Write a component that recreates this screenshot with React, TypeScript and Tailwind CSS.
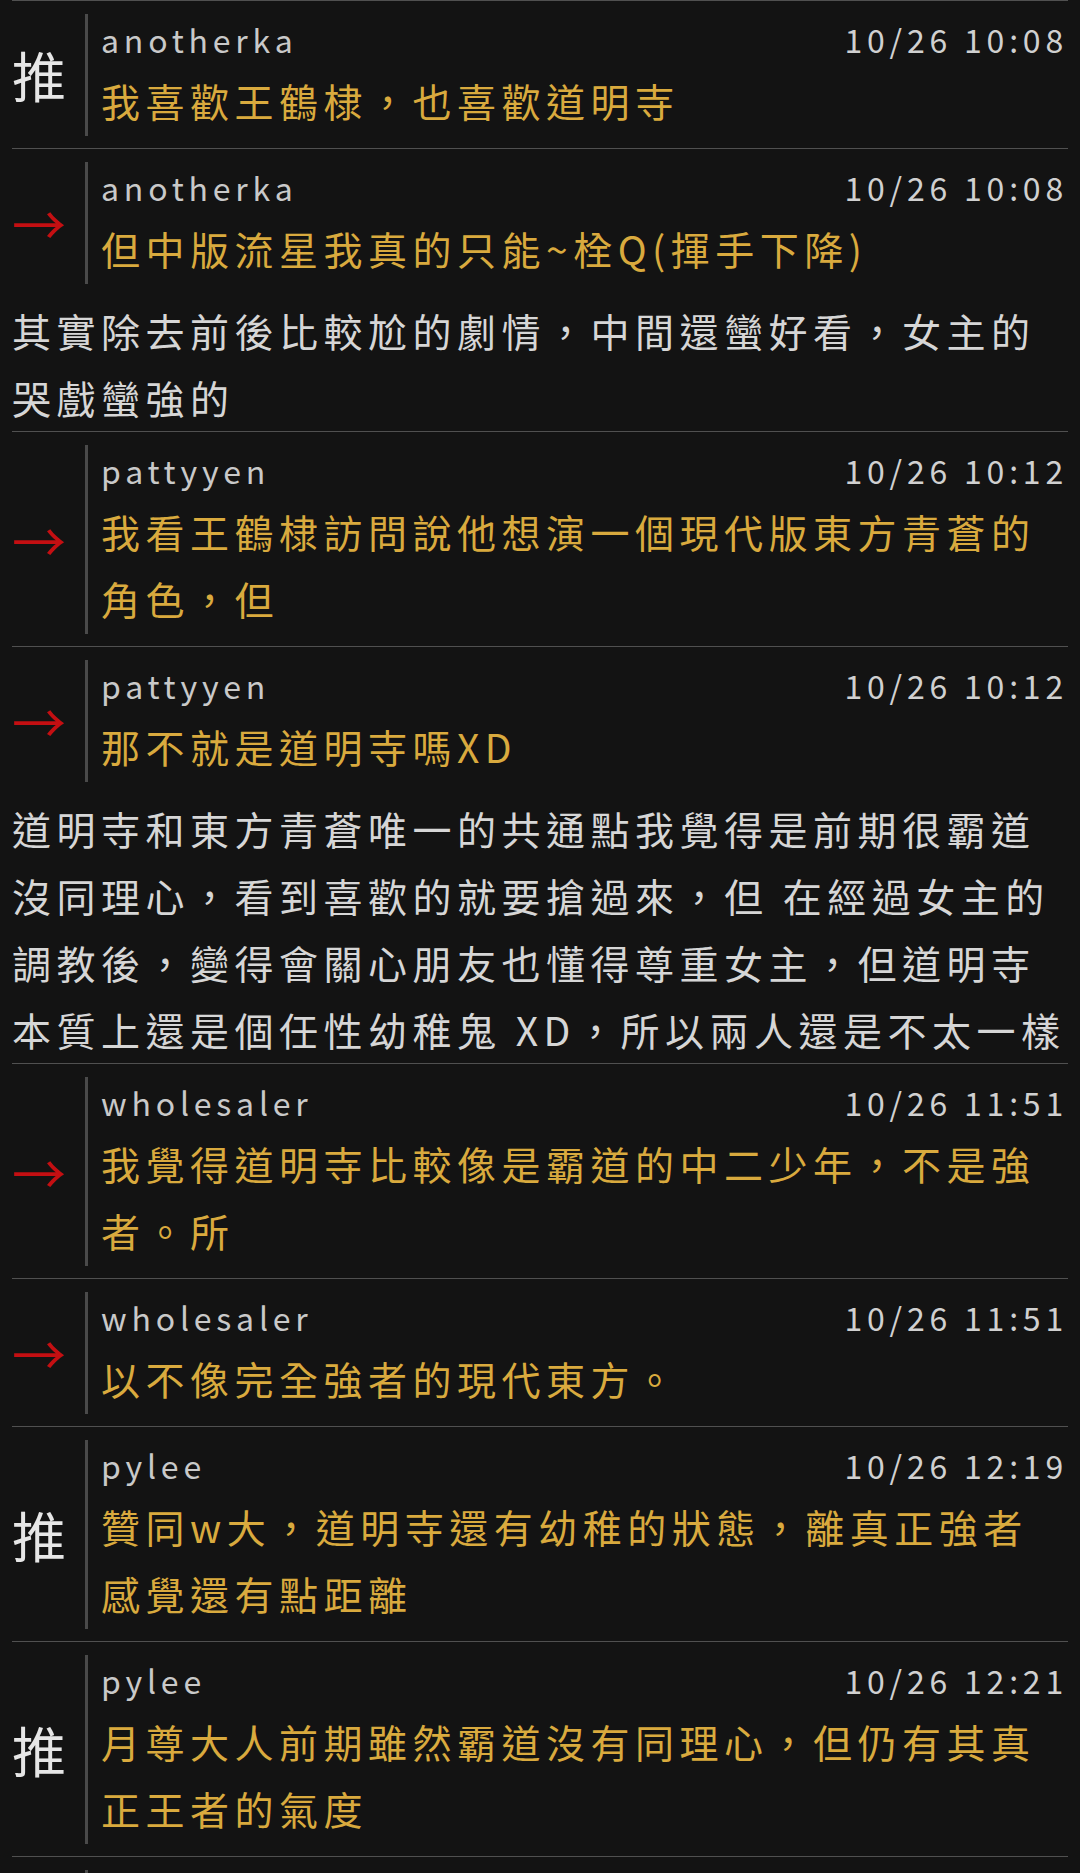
import * as React from 'react';

type Comment = {
  tag: '推' | '→';
  user: string;
  time: string;
  lines: string[];
  extra?: string[];
};

const comments: Comment[] = [
  {
    tag: '推',
    user: 'anotherka',
    time: '10/26 10:08',
    lines: ['我喜歡王鶴棣，也喜歡道明寺'],
  },
  {
    tag: '→',
    user: 'anotherka',
    time: '10/26 10:08',
    lines: ['但中版流星我真的只能~栓Q(揮手下降)'],
    extra: ['其實除去前後比較尬的劇情，中間還蠻好看，女主的', '哭戲蠻強的'],
  },
  {
    tag: '→',
    user: 'pattyyen',
    time: '10/26 10:12',
    lines: ['我看王鶴棣訪問說他想演一個現代版東方青蒼的', '角色，但'],
  },
  {
    tag: '→',
    user: 'pattyyen',
    time: '10/26 10:12',
    lines: ['那不就是道明寺嗎XD'],
    extra: [
      '道明寺和東方青蒼唯一的共通點我覺得是前期很霸道',
      '沒同理心，看到喜歡的就要搶過來，但 在經過女主的',
      '調教後，變得會關心朋友也懂得尊重女主，但道明寺',
      '本質上還是個任性幼稚鬼 XD，所以兩人還是不太一樣',
    ],
  },
  {
    tag: '→',
    user: 'wholesaler',
    time: '10/26 11:51',
    lines: ['我覺得道明寺比較像是霸道的中二少年，不是強', '者。所'],
  },
  {
    tag: '→',
    user: 'wholesaler',
    time: '10/26 11:51',
    lines: ['以不像完全強者的現代東方。'],
  },
  {
    tag: '推',
    user: 'pylee',
    time: '10/26 12:19',
    lines: ['贊同w大，道明寺還有幼稚的狀態，離真正強者', '感覺還有點距離'],
  },
  {
    tag: '推',
    user: 'pylee',
    time: '10/26 12:21',
    lines: ['月尊大人前期雖然霸道沒有同理心，但仍有其真', '正王者的氣度'],
  },
];

function CommentBlock({ comment }: { comment: Comment }) {
  return (
    <div className="border-t border-[#505050] pt-[13px]">
      <div className="flex items-center">
        <div
          className={`w-[73px] shrink-0 text-[54px] leading-none ${
            comment.tag === '推' ? 'text-[#e6e6e6]' : 'text-[#c40f12]'
          }`}
        >
          {comment.tag}
        </div>
        <div className="min-w-0 flex-1 border-l-[3px] border-[#4a4a4a] pl-[13px]">
          <div className="flex h-[53px] items-center justify-between pb-[3px] text-[32px] tracking-[4.8px] text-[#c9c9c9]">
            <span>{comment.user}</span>
            <span className="text-[#d0d0d0]">{comment.time}</span>
          </div>
          <div className="pb-[2px] text-[39px] leading-[67px] tracking-[5.5px] whitespace-nowrap text-[#d9aa3e]">
            {comment.lines.map((line, i) => (
              <div key={i}>{line}</div>
            ))}
          </div>
        </div>
      </div>
      {comment.extra ? (
        <div className="mt-[13px] text-[39px] leading-[67px] tracking-[5.5px] whitespace-nowrap text-[#d6d6d6]">
          {comment.extra.map((line, i) => (
            <div key={i}>{line}</div>
          ))}
        </div>
      ) : (
        <div className="h-[12px]" />
      )}
    </div>
  );
}

export default function App() {
  return (
    <div className="h-[1873px] overflow-hidden bg-[#131313] px-[12px] font-['Noto_Sans_CJK_TC','Noto_Sans',sans-serif]">
      {comments.map((c, i) => (
        <CommentBlock key={i} comment={c} />
      ))}
      {/* next comment, cut off by the bottom of the screen */}
      <div className="border-t border-[#505050] pt-[13px]">
        <div className="ml-[73px] h-[122px] border-l-[3px] border-[#4a4a4a]" />
      </div>
    </div>
  );
}
